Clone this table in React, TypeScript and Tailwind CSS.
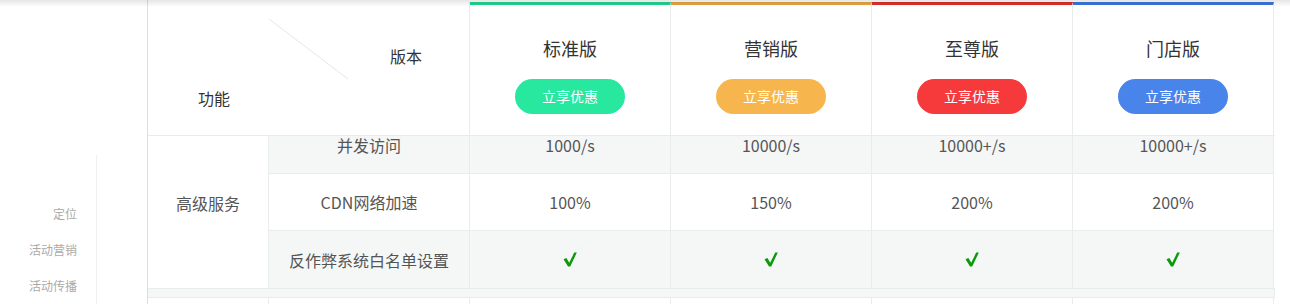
import React from "react";

const versions = [
  { name: "标准版", bar: "border-t-[#1fd38b]", btn: "bg-[#27e89e]" },
  { name: "营销版", bar: "border-t-[#e2a43f]", btn: "bg-[#f7b64d]" },
  { name: "至尊版", bar: "border-t-[#dd2e2e]", btn: "bg-[#f6393b]" },
  { name: "门店版", bar: "border-t-[#3c74da]", btn: "bg-[#4884ea]" },
];

const rows = [
  { label: "并发访问", values: ["1000/s", "10000/s", "10000+/s", "10000+/s"], shade: true, top: true },
  { label: "CDN网络加速", values: ["100%", "150%", "200%", "200%"], shade: false, top: false },
  { label: "反作弊系统白名单设置", values: ["√", "√", "√", "√"], shade: true, top: false },
];

// the √ mark, drawn so it has no radical overbar
const Check = () => (
  <svg width="14" height="15" viewBox="0 0 14 15" aria-label="√">
    <path d="M0.5 7.2 L3.4 6 L6.2 10.8 L11.2 0.6 L13.8 0.6 L7.2 14.6 L5 14.6 Z" fill="#0a9a0a" />
  </svg>
);

export default function App() {
  return (
    <div className="relative w-[1290px] h-[304px] overflow-hidden bg-white flex font-['Noto_Sans_CJK_SC','Noto_Sans',sans-serif]">
      {/* header shadow */}
      <div className="absolute top-0 left-0 right-0 h-[7px] bg-gradient-to-b from-black/10 to-transparent z-10" />

      {/* sidebar */}
      <div className="w-[148px] shrink-0 border-r border-[#dedede] flex">
        <div className="w-[96px] flex flex-col items-end pr-[19px] pt-[205px] gap-[18px] text-[12px] leading-[18px] text-[#aaa]">
          <span>定位</span>
          <span>活动营销</span>
          <span>活动传播</span>
        </div>
        <div className="mt-[155px] border-l border-[#f0f0f0]" />
      </div>

      {/* table */}
      <div className="w-[1127px] shrink-0 flex flex-col pt-[2px] text-[#555]">
        {/* header */}
        <div className="flex shrink-0 h-[134px] border-b border-[#e8eceb]">
          <div className="relative w-[322px] border-r border-[#e8eceb] text-[16px] text-[#333]">
            <svg className="absolute left-[121px] top-[17px]" width="80" height="62">
              <line x1="0" y1="0" x2="79" y2="60" stroke="#e6e6e6" strokeWidth="1" />
            </svg>
            <span className="absolute left-[242px] top-[42px]">版本</span>
            <span className="absolute left-[50px] top-[84px]">功能</span>
          </div>
          {versions.map((v) => (
            <div
              key={v.name}
              className={`w-[201px] border-r border-[#e8eceb] border-t-[3px] ${v.bar} flex flex-col items-center`}
            >
              <div className="mt-[31px] text-[18px] leading-[24px] text-[#333]">{v.name}</div>
              <button className={`mt-[19px] w-[110px] h-[35px] rounded-full ${v.btn} text-white text-[14px]`}>
                立享优惠
              </button>
            </div>
          ))}
        </div>

        {/* body */}
        <div className="flex shrink-0 border-b border-[#e8eceb]">
          <div className="w-[121px] border-r border-[#e8eceb] flex items-center justify-center pb-[18px] text-[16px]">
            高级服务
          </div>
          <div className="flex flex-col">
            {rows.map((r, i) => (
              <div
                key={r.label}
                className={`flex shrink-0 text-[16px] ${i < rows.length - 1 ? "border-b border-[#e8eceb]" : ""} ${
                  r.top ? "h-[38px]" : "h-[57px]"
                } ${r.shade ? "bg-[#f4f7f6]" : "bg-white"}`}
              >
                <div
                  className={`w-[201px] border-r border-[#e8eceb] flex justify-center ${
                    r.top ? "items-start leading-[18px]" : "items-center"
                  }`}
                >
                  {r.label}
                </div>
                {r.values.map((val, j) => (
                  <div
                    key={j}
                    className={`w-[201px] border-r border-[#e8eceb] flex justify-center ${
                      r.top ? "items-start leading-[18px]" : "items-center"
                    }`}
                  >
                    {val === "√" ? <Check /> : val}
                  </div>
                ))}
              </div>
            ))}
          </div>
        </div>

        {/* spacer band */}
        <div className="h-[9px] shrink-0 bg-[#f4f7f6] border-b border-r border-[#e8eceb]" />

        {/* next row */}
        <div className="flex shrink-0 h-[20px]">
          <div className="w-[121px] border-r border-[#e8eceb]" />
          {[0, 1, 2, 3, 4].map((k) => (
            <div key={k} className="w-[201px] border-r border-[#e8eceb]" />
          ))}
        </div>
      </div>
    </div>
  );
}
